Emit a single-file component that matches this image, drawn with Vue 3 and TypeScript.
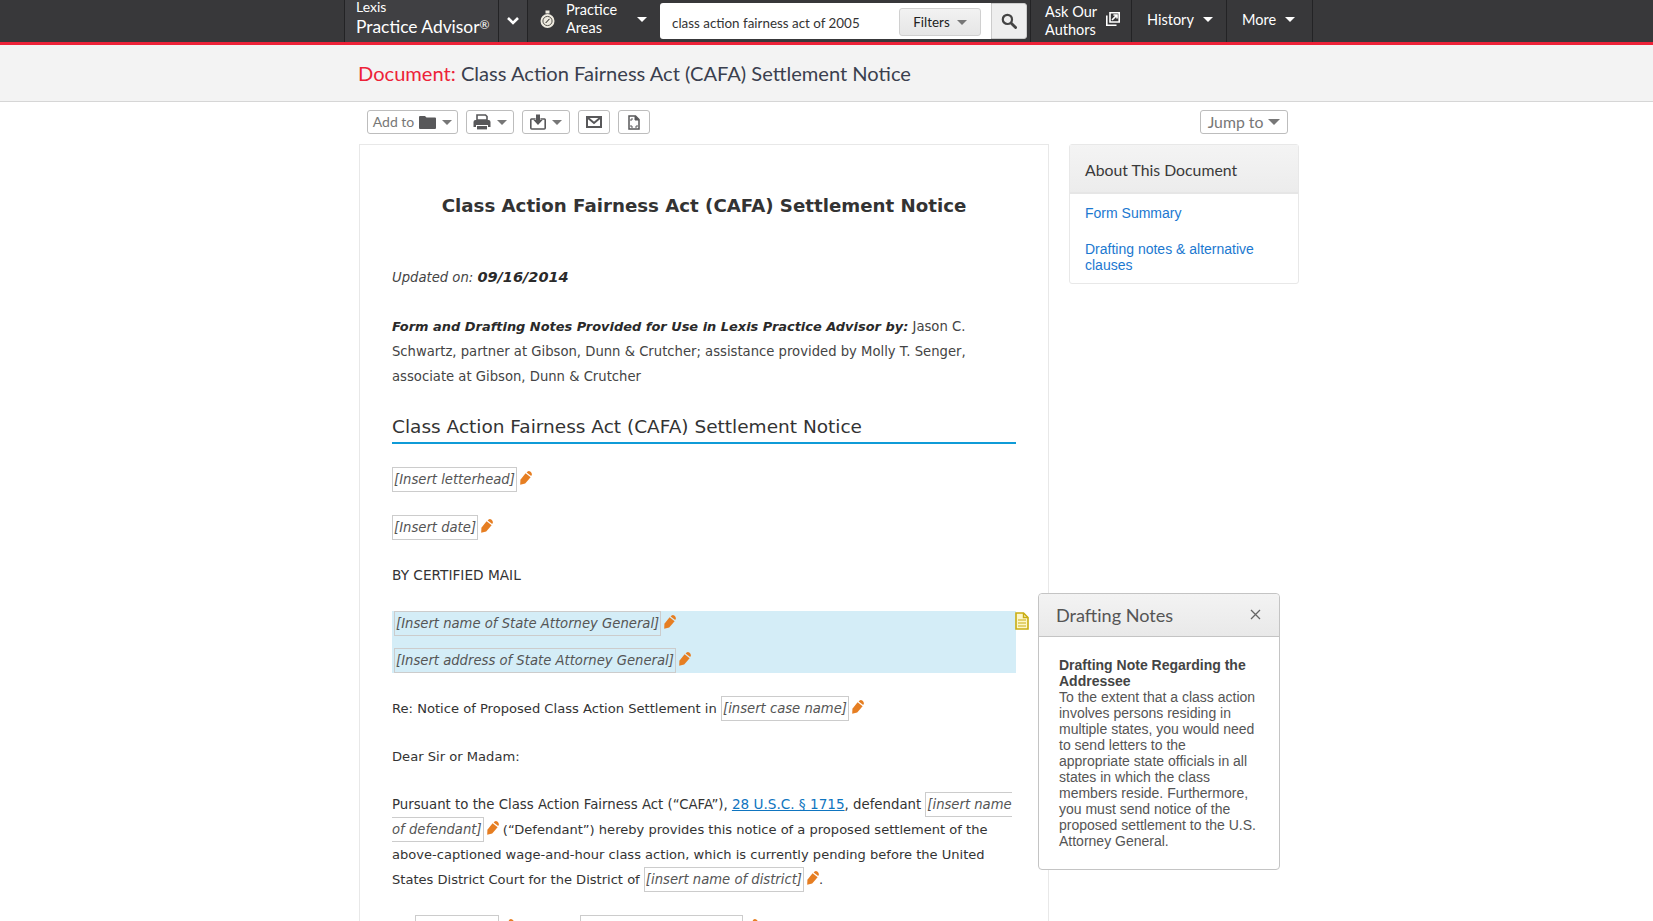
<script setup lang="ts">
const noteText =
  'To the extent that a class action involves persons residing in multiple states, you would need to send letters to the appropriate state officials in all states in which the class members reside. Furthermore, you must send notice of the proposed settlement to the U.S. Attorney General.'
</script>

<template>
  <div class="page">
    <svg class="defs" width="0" height="0" aria-hidden="true">
      <symbol id="pencil" viewBox="0 0 12 14">
        <path d="M0.2 13.8 L0.4 8.8 L5.6 2.2 L10.6 6.2 L5.2 12.4 Z" fill="#e67e22" />
        <path d="M6.6 1.6 L7.6 0.5 Q9 -0.4 10.6 0.8 Q12.2 2.2 11.8 3.8 L11.2 5 Z" fill="#e67e22" />
      </symbol>
    </svg>

    <header class="nav">
      <div class="nav-inner">
        <div class="brand nav-cell">
          <span class="brand-top">Lexis</span>
          <span class="brand-main">Practice Advisor<sup>®</sup></span>
        </div>
        <div class="chev nav-cell">
          <svg width="14" height="10" viewBox="0 0 14 10">
            <path d="M2 2 L7 7 L12 2" fill="none" stroke="#fff" stroke-width="2.6" />
          </svg>
        </div>
        <div class="practice nav-cell">
          <svg class="watch" width="15" height="19" viewBox="0 0 15 19">
            <rect x="5.5" y="0.5" width="4" height="3" fill="#eeeadf" />
            <circle cx="7.5" cy="11" r="7" fill="#eeeadf" />
            <circle cx="7.5" cy="11" r="4.6" fill="none" stroke="#55534e" stroke-width="1" />
            <path d="M5.8 12.9 L8.4 10.1 L9.4 8.9 L6.8 11.7 Z" fill="#55534e" stroke="#55534e" />
          </svg>
          <span class="two-line">Practice<br />Areas</span>
          <i class="caret white practice-caret"></i>
        </div>
        <div class="search">
          <div class="search-box">
            <span class="query">class action fairness act of 2005</span>
            <span class="filters">Filters <i class="caret grey"></i></span>
          </div>
          <div class="search-btn">
            <svg width="16" height="16" viewBox="0 0 16 16">
              <circle cx="6.4" cy="6.4" r="4.6" fill="none" stroke="#444" stroke-width="2.2" />
              <path d="M10 10 L14.6 14.6" stroke="#444" stroke-width="2.8" stroke-linecap="round" />
            </svg>
          </div>
        </div>
        <div class="ask nav-cell">
          <span class="two-line">Ask Our<br />Authors</span>
          <svg width="14" height="14" viewBox="0 0 14 14">
            <path d="M4 0.8 H13.2 V10 H4 Z" fill="none" stroke="#fff" stroke-width="1.6" />
            <path d="M0.8 3.5 V13.2 H10.5" fill="none" stroke="#fff" stroke-width="1.6" />
            <path d="M6 8 L10.6 3.4 M7.4 3 H11 V6.6" fill="none" stroke="#fff" stroke-width="1.6" />
          </svg>
        </div>
        <div class="history nav-cell">History <i class="caret white"></i></div>
        <div class="more nav-cell">More <i class="caret white"></i></div>
      </div>
    </header>

    <div class="titlebar">
      <h1><span class="red">Document:</span> Class Action Fairness Act (CAFA) Settlement Notice</h1>
    </div>

    <div class="container">
      <div class="toolbar">
        <button class="tool add">
          <span class="add-label">Add to</span>
          <svg width="18" height="14" viewBox="0 0 18 14">
            <path d="M0 2 Q0 1 1 1 H6 L7.5 2.5 H16 Q17 2.5 17 3.5 V13 Q17 14 16 14 H1 Q0 14 0 13 Z" fill="#58585a" />
          </svg>
          <i class="caret grey"></i>
        </button>
        <button class="tool icon-caret">
          <svg width="18" height="16" viewBox="0 0 18 16">
            <path d="M4 1 H12.5 L14 2.5 V6 H4 Z" fill="none" stroke="#58585a" stroke-width="1.6" />
            <path d="M2.5 6 H15.5 Q17.5 6 17.5 8 V13 H15 V11 H3 V13 H0.5 V8 Q0.5 6 2.5 6 Z" fill="#58585a" />
            <rect x="4" y="12" width="10" height="3.4" fill="#58585a" />
          </svg>
          <i class="caret grey"></i>
        </button>
        <button class="tool icon-caret">
          <svg width="16" height="16" viewBox="0 0 16 16">
            <path d="M5.6 5 H1.4 Q0.8 5 0.8 5.8 V14 Q0.8 15 1.8 15 H14.2 Q15.2 15 15.2 14 V5.8 Q15.2 5 14.6 5 H10.4" fill="none" stroke="#58585a" stroke-width="1.6" />
            <path d="M6 0.5 H10 V6 H12.6 L8 11 L3.4 6 H6 Z" fill="#58585a" />
          </svg>
          <i class="caret grey"></i>
        </button>
        <button class="tool solo">
          <svg width="16" height="12" viewBox="0 0 16 12">
            <rect x="1" y="1" width="14" height="10" fill="none" stroke="#58585a" stroke-width="2" />
            <path d="M1.5 1.5 L8 7 L14.5 1.5" fill="none" stroke="#58585a" stroke-width="2" />
          </svg>
        </button>
        <button class="tool solo">
          <svg width="12" height="15" viewBox="0 0 12 15">
            <path d="M1 1 H7.5 L11 4.5 V14 H1 Z" fill="none" stroke="#58585a" stroke-width="1.5" />
            <path d="M7 1 V5 H11" fill="#58585a" stroke="#58585a" stroke-width="1" />
            <path d="M3 6 V4 H5 M3 10 V12 H5 M9 10 V12 H7" fill="none" stroke="#58585a" stroke-width="1" />
          </svg>
        </button>
        <button class="tool jump">Jump to <i class="caret grey big"></i></button>
      </div>

      <div class="columns">
        <main class="doc">
          <h2 class="doc-title">Class Action Fairness Act (CAFA) Settlement Notice</h2>

          <p class="updated"><em>Updated on: <strong>09/16/2014</strong></em></p>

          <p class="credits">
            <strong><em>Form and Drafting Notes Provided for Use in Lexis Practice Advisor by:</em></strong>
            Jason C. Schwartz, partner at Gibson, Dunn &amp; Crutcher; assistance provided by Molly T. Senger, associate at Gibson, Dunn &amp; Crutcher
          </p>

          <h3 class="section">Class Action Fairness Act (CAFA) Settlement Notice</h3>

          <p class="row first-row"><span class="ins">[Insert letterhead]</span><svg class="pen"><use href="#pencil" /></svg></p>
          <p class="row"><span class="ins">[Insert date]</span><svg class="pen"><use href="#pencil" /></svg></p>
          <p class="row caps">BY CERTIFIED MAIL</p>

          <div class="highlight">
            <p class="hl-row"><span class="ins">[Insert name of State Attorney General]</span><svg class="pen"><use href="#pencil" /></svg></p>
            <p class="hl-row"><span class="ins">[Insert address of State Attorney General]</span><svg class="pen"><use href="#pencil" /></svg></p>
            <svg class="note-flag" width="14" height="18" viewBox="0 0 14 18">
              <path d="M1 1 H8.5 L13 5.5 V17 H1 Z" fill="#fdf6c8" stroke="#c9ad12" stroke-width="1.6" />
              <path d="M8.5 1 V5.5 H13" fill="none" stroke="#c9ad12" stroke-width="1.4" />
              <path d="M3 8 H11 M3 11 H11 M3 14 H11" stroke="#c9ad12" stroke-width="1.2" />
            </svg>
          </div>

          <p class="row after-hl">Re: Notice of Proposed Class Action Settlement in <span class="ins">[insert case name]</span><svg class="pen"><use href="#pencil" /></svg></p>
          <p class="row">Dear Sir or Madam:</p>
          <p class="row body">
            <span class="lead">Pursuant to the Class Action Fairness Act (“CAFA”),</span> <a class="cite">28 U.S.C. § 1715</a><span class="lead">, defendant</span> <span class="ins">[insert name<br />of defendant]</span><svg class="pen"><use href="#pencil" /></svg>
            (“Defendant”) hereby provides this notice of a proposed settlement of the above-captioned wage-and-hour class action, which is currently pending before the United States District Court for the District of
            <span class="ins">[insert name of district]</span><svg class="pen"><use href="#pencil" /></svg>.
          </p>
          <p class="row last">
            <span class="blank one"></span><svg class="pen"><use href="#pencil" /></svg>
            <span class="blank two"></span><svg class="pen"><use href="#pencil" /></svg>
          </p>
        </main>

        <aside class="about">
          <div class="about-head">About This Document</div>
          <div class="about-body">
            <a>Form Summary</a>
            <a>Drafting notes &amp; alternative clauses</a>
          </div>
        </aside>
      </div>
    </div>

    <section class="notes">
      <div class="notes-head">
        <span>Drafting Notes</span>
        <svg width="11" height="11" viewBox="0 0 11 11">
          <path d="M1 1 L10 10 M10 1 L1 10" stroke="#666" stroke-width="1.3" />
        </svg>
      </div>
      <div class="notes-body">
        <strong>Drafting Note Regarding the Addressee</strong><br />
        {{ noteText }}
      </div>
    </section>
  </div>
</template>

<style>
html, body { margin: 0; background: #fff; overflow: hidden; }
</style>

<style scoped>
.page { position: relative; width: 1653px; height: 921px; overflow: hidden; background: #fff; font-family: "Lato", "Liberation Sans", sans-serif; }
.defs { position: absolute; }

.nav { height: 42px; background: #38383a; border-bottom: 3px solid #ed2238; }
.nav-inner { display: flex; height: 42px; margin-left: 344px; color: #fff; font-size: 14.5px; }
.nav-cell { display: flex; align-items: center; box-sizing: border-box; border-left: 1px solid #232325; height: 42px; }
.brand { width: 154px; flex-direction: column; align-items: flex-start; padding-left: 11px; background: #404043; overflow: hidden; justify-content: flex-start; }
.brand-top { font-size: 14px; line-height: 14px; }
.brand-main { font-size: 17.4px; line-height: 26px; white-space: nowrap; }
.brand-main sup { font-size: 12px; line-height: 0; vertical-align: 4px; }
.chev { width: 29px; justify-content: center; background: #404043; }
.practice { width: 131px; padding-left: 12px; padding-bottom: 4px; position: relative; }
.watch { margin-right: 11px; }
.two-line { line-height: 18px; }
.practice-caret { position: absolute; left: 109px; top: 17px; }
.search { display: flex; align-items: center; margin-left: 2px; width: 370px; height: 42px; }
.search-box { box-sizing: border-box; width: 331px; height: 36px; background: #fff; border-radius: 3px 0 0 3px; display: flex; align-items: center; justify-content: space-between; padding: 0 10px 0 12px; color: #333; font-size: 13.4px; }
.query { color: #333; white-space: nowrap; margin-top: 3px; }
.filters { box-sizing: border-box; width: 82px; height: 28px; margin-top: 2px; background: linear-gradient(#f2f2f2, #e6e6e6); border: 1px solid #d0d0d0; border-radius: 3px; display: flex; align-items: center; justify-content: center; gap: 7px; color: #222; }
.search-btn { box-sizing: border-box; width: 36px; height: 36px; background: #eeeeee; border: 1px solid #ccc; border-radius: 0 3px 3px 0; display: flex; align-items: center; justify-content: center; }
.ask { width: 101px; padding-left: 14px; gap: 9px; }
.ask svg { margin-top: -4px; }
.history { width: 95px; padding-left: 15px; padding-bottom: 4px; gap: 9px; }
.more { width: 87px; padding-left: 15px; padding-bottom: 4px; gap: 9px; border-right: 1px solid #232325; }

.caret { display: inline-block; width: 0; height: 0; border-left: 5px solid transparent; border-right: 5px solid transparent; }
.caret.white { border-top: 5px solid #fff; }
.caret.grey { border-top: 5px solid #777; }
.caret.big { border-left-width: 6px; border-right-width: 6px; border-top-width: 6px; }

.titlebar { box-sizing: border-box; height: 57px; background: #f3f3f3; border-bottom: 1px solid #d6d6d6; padding-left: 358px; }
.titlebar h1 { margin: 0; font-weight: 400; font-size: 20.1px; line-height: 56px; color: #3a3f4e; }
.red { color: #ed2238; }

.container { margin-left: 359px; width: 940px; }
.toolbar { box-sizing: border-box; display: flex; height: 42px; padding: 8px 11px 0 8px; gap: 8px; align-items: flex-start; }
.tool { box-sizing: border-box; height: 24px; border: 1px solid #bdbdbd; border-radius: 3px; background: #fff; display: flex; align-items: center; justify-content: center; font-family: inherit; font-size: 14px; color: #777; padding: 0; gap: 5px; }
.add { width: 91px; gap: 5px; }
.add-label { margin-top: -1px; }
.icon-caret { width: 48px; gap: 6px; }
.solo { width: 32px; }
.jump { width: 88px; margin-left: auto; font-size: 15.8px; gap: 5px; padding-bottom: 1px; }

.columns { display: flex; gap: 20px; align-items: flex-start; }
.doc { box-sizing: border-box; width: 690px; height: 800px; border: 1px solid #e8e8e8; border-bottom: 0; padding: 0 32px; font-family: "DejaVu Sans", "Liberation Sans", sans-serif; font-size: 13.2px; line-height: 25px; color: #444; }
.doc p { margin: 0; }
.doc-title { margin: 48px 0 0; font-size: 18.2px; line-height: 25px; font-weight: 700; text-align: center; color: #333; }
.updated { padding-top: 47px; }
.updated strong { font-size: 14.5px; color: #2a2a2a; }
.credits strong { font-size: 12.95px; color: #2a2a2a; }
.credits { margin-top: 24px !important; }
.section { margin: 25px 0 0; height: 28px; font-weight: 400; font-size: 18.5px; line-height: 26px; color: #333; border-bottom: 2px solid #0f9bd7; box-sizing: content-box; }
.row { margin-top: 23px !important; color: #333; font-size: 13.1px; }
.first-row { margin-top: 23px !important; }
.caps { font-size: 13.7px; }
.body { font-size: 13.05px; }
.lead { font-size: 13.3px; }
.ins { border: 1px solid #ccc; padding: 4px 1px; font-style: italic; color: #555; font-size: 13.2px; }
.pen { width: 12px; height: 14px; margin-left: 3px; vertical-align: -1px; }
.highlight { position: relative; margin-top: 23px; background: #d4edf7; height: 62px; padding: 0 2px; }
.hl-row { height: 37px; line-height: 25px; color: #333; }
.note-flag { position: absolute; left: 623px; top: 1px; }
.cite { color: #0f75c0; text-decoration: underline; font-size: 13.6px; }
.blank { display: inline-block; box-sizing: border-box; height: 25px; border: 1px solid #ccc; vertical-align: top; }
.blank.one { width: 84px; margin-left: 23px; }
.blank.two { width: 163px; margin-left: 66px; }

.about { box-sizing: border-box; width: 230px; border: 1px solid #e8e8e8; border-radius: 3px; font-family: "Liberation Sans", sans-serif; }
.about-head { box-sizing: border-box; height: 49px; background: linear-gradient(#f4f4f4, #ececec); border-bottom: 2px solid #e6e6e6; padding-left: 15px; font-family: "Lato", sans-serif; font-size: 15.8px; line-height: 50px; color: #3a3a3a; }
.about-body { display: flex; flex-direction: column; gap: 20px; padding: 11px 15px 10px; font-size: 14px; line-height: 16px; color: #1b78d0; }

.notes { position: absolute; left: 1038px; top: 593px; box-sizing: border-box; width: 242px; height: 277px; background: #fff; border: 1px solid #c4c4c4; border-radius: 4px; font-family: "Liberation Sans", sans-serif; }
.notes-head { box-sizing: border-box; height: 43px; background: linear-gradient(#f3f3f3, #e9e9e9); border-bottom: 1px solid #c4c4c4; border-radius: 4px 4px 0 0; display: flex; align-items: center; justify-content: space-between; padding: 0 18px 1px 17px; font-family: "Lato", sans-serif; font-size: 18.1px; color: #555; }
.notes-body { padding: 20px 20px 0 20px; font-size: 14px; line-height: 16px; color: #555; }
.notes-body strong { color: #444; }
</style>
